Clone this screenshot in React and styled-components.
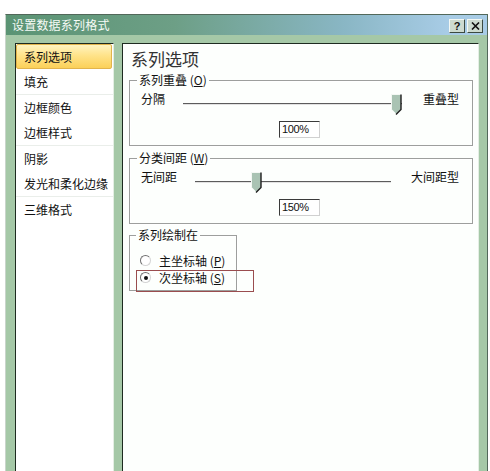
import React from "react";
import styled, { createGlobalStyle } from "styled-components";

const GlobalStyle = createGlobalStyle`
  html, body {
    margin: 0;
    padding: 0;
    background: #ffffff;
  }
  body {
    font-family: "Noto Sans CJK SC", "Noto Sans", sans-serif;
    color: #111;
  }
`;

const categories = [
  ["系列选项", "填充"],
  ["边框颜色", "边框样式"],
  ["阴影", "发光和柔化边缘"],
  ["三维格式"],
];

const App = () => {
  return (
    <>
      <GlobalStyle />
      <Page>
        <Dialog>
          <TitleBar>
            <Title>设置数据系列格式</Title>
            <TitleButtons>
              <CaptionButton>?</CaptionButton>
              <CaptionButton>
                <svg width="9" height="8" viewBox="0 0 9 8">
                  <path d="M1 0.5 L8 7.5 M8 0.5 L1 7.5" stroke="#111" strokeWidth="1.6" />
                </svg>
              </CaptionButton>
            </TitleButtons>
          </TitleBar>

          <Body>
            <NavPanel>
              {categories.map((group, gi) => (
                <React.Fragment key={gi}>
                  {gi > 0 && <NavSeparator />}
                  {group.map((name) => (
                    <NavItem key={name} $active={name === "系列选项"}>
                      {name}
                    </NavItem>
                  ))}
                </React.Fragment>
              ))}
            </NavPanel>

            <ContentPanel>
              <Heading>系列选项</Heading>

              <Group $top={9}>
                <Legend>
                  系列重叠 (<u>O</u>)
                </Legend>
                <SliderRow>
                  <SideLabel $width={42}>分隔</SideLabel>
                  <Slider width={219} value={1} />
                  <SideLabel $gap={21}>重叠型</SideLabel>
                </SliderRow>
                <ValueBox>100%</ValueBox>
              </Group>

              <Group $top={12}>
                <Legend>
                  分类间距 (<u>W</u>)
                </Legend>
                <SliderRow>
                  <SideLabel $width={54}>无间距</SideLabel>
                  <Slider width={196} value={0.3} />
                  <SideLabel $gap={20}>大间距型</SideLabel>
                </SliderRow>
                <ValueBox>150%</ValueBox>
              </Group>

              <Group $top={11} $width={108} $compact>
                <Legend>系列绘制在</Legend>
                <RadioRow>
                  <RadioDot />
                  <span>
                    主坐标轴 (<u>P</u>)
                  </span>
                </RadioRow>
                <RadioRow>
                  <RadioDot $checked />
                  <span>
                    次坐标轴 (<u>S</u>)
                  </span>
                </RadioRow>
              </Group>

              <Highlight />
            </ContentPanel>
          </Body>
        </Dialog>
      </Page>
    </>
  );
};

const Slider = ({ width, value }) => (
  <SliderTrack $width={width}>
    <Thumb style={{ left: Math.round(value * (width - 11)) }}>
      <svg width="11" height="21" viewBox="0 0 11 21">
        <polygon points="0.5,0.5 10,0.5 10,15 5.5,20 0.5,15" fill="#a9c3b3" />
        <polyline points="0.5,15 0.5,0.5 10,0.5" fill="none" stroke="#f4f8f4" />
        <polyline points="10,0.5 10,15.5 5,20.5" fill="none" stroke="#1e1e1e" strokeWidth="1.4" />
      </svg>
    </Thumb>
  </SliderTrack>
);

const Page = styled.div`
  height: 471px;
  overflow: hidden;
  padding: 14px 0 0 5px;
  box-sizing: border-box;
`;

const Dialog = styled.div`
  width: 483px;
  height: 470px;
  box-sizing: border-box;
  border: 1px solid #52685a;
  border-left-color: #c9d4cb;
  background: #a5c8a7;
  display: flex;
  flex-direction: column;
`;

const TitleBar = styled.div`
  height: 20px;
  flex-shrink: 0;
  display: flex;
  align-items: center;
  justify-content: space-between;
  padding: 0 4px 0 6px;
  background: linear-gradient(to right, #5b9474 0%, #6d9f86 35%, #89b6c4 70%, #a8cce6 92%);
`;

const Title = styled.span`
  color: #f6fbf6;
  font-size: 12px;
  line-height: 20px;
  letter-spacing: 0.2px;
`;

const TitleButtons = styled.div`
  display: flex;
  gap: 2px;
  padding-top: 2px;
`;

const CaptionButton = styled.div`
  width: 16px;
  height: 14px;
  box-sizing: border-box;
  display: flex;
  align-items: center;
  justify-content: center;
  background: #cddbd0;
  border: 1px solid;
  border-color: #f4f8f4 #3c4a40 #3c4a40 #f4f8f4;
  font-family: "Liberation Sans", sans-serif;
  font-weight: bold;
  font-size: 11px;
  color: #111;
`;

const Body = styled.div`
  flex: 1;
  display: flex;
  gap: 8px;
  padding: 8px 8px 8px 9px;
`;

const NavPanel = styled.div`
  width: 99px;
  box-sizing: border-box;
  background: #ffffff;
  border: 1px solid;
  border-color: #1d2b20 #e4eee4 #e4eee4 #1d2b20;
  display: flex;
  flex-direction: column;
`;

const NavItem = styled.div`
  height: 25px;
  box-sizing: border-box;
  padding-left: 7px;
  font-size: 12px;
  margin-right: 1px;
  border-radius: 2px;
  border: 1px solid ${(p) => (p.$active ? "#e2b44c" : "transparent")};
  line-height: 23px;
  background: ${(p) =>
    p.$active ? "linear-gradient(to bottom, #fff4c0 0%, #ffe38a 45%, #fbd059 100%)" : "transparent"};
`;

const NavSeparator = styled.div`
  height: 1px;
  background: #eaeeea;
`;

const ContentPanel = styled.div`
  position: relative;
  flex: 1;
  box-sizing: border-box;
  background: #fdfffd;
  border: 1px solid;
  border-color: #1d2b20 #e4eee4 #e4eee4 #1d2b20;
  padding: 0 5px 0 6px;
`;

const Heading = styled.div`
  padding: 3px 0 0 2px;
  font-size: 17px;
  line-height: 24px;
  color: #333;
`;

const Group = styled.div`
  margin-top: ${(p) => p.$top}px;
  width: ${(p) => (p.$width ? `${p.$width}px` : "auto")};
  box-sizing: border-box;
  border: 1px solid #9d9f9d;
  box-shadow: inset 1px 1px 0 #ffffff, 1px 1px 0 #ffffff;
  padding: 0 ${(p) => (p.$compact ? 2 : 10)}px ${(p) => (p.$compact ? 4 : 7)}px
    ${(p) => (p.$compact ? 10 : 11)}px;
  white-space: nowrap;
`;

const Legend = styled.div`
  width: fit-content;
  margin: -10px 0 0 -4px;
  padding: 0 2px;
  background: #fdfffd;
  font-size: 12px;
  line-height: 18px;
`;

const SliderRow = styled.div`
  display: flex;
  align-items: flex-start;
  height: 22px;
  padding-top: 3px;
`;

const SideLabel = styled.span`
  width: ${(p) => (p.$width ? `${p.$width}px` : "auto")};
  margin-left: ${(p) => p.$gap || 0}px;
  font-size: 12px;
  line-height: 14px;
`;

const SliderTrack = styled.div`
  position: relative;
  width: ${(p) => p.$width}px;
  height: 2px;
  margin-top: 11px;
  box-sizing: border-box;
  border-top: 1px solid #5c5c5c;
  border-bottom: 1px solid #e2e2e2;
`;

const Thumb = styled.div`
  position: absolute;
  top: -10px;
  width: 11px;
  height: 21px;
  line-height: 0;
`;

const ValueBox = styled.div`
  width: 41px;
  height: 17px;
  box-sizing: border-box;
  margin: 7px 0 0 138px;
  background: #ffffff;
  border: 1px solid;
  border-color: #3a3a3a #d0d0d0 #d0d0d0 #3a3a3a;
  padding-left: 2px;
  font-family: "Liberation Sans", sans-serif;
  font-size: 11px;
  letter-spacing: -0.4px;
  line-height: 15px;
`;

const RadioRow = styled.div`
  display: flex;
  align-items: center;
  gap: 8px;
  height: 17px;
  font-size: 12px;
  line-height: 17px;
  &:nth-of-type(2) {
    margin-top: 8px;
  }
`;

const RadioDot = styled.span`
  position: relative;
  width: 11px;
  height: 11px;
  box-sizing: border-box;
  border-radius: 50%;
  border: 1px solid;
  border-color: #6f6f6f #d4d4d4 #d4d4d4 #6f6f6f;
  background: #ffffff;
  flex-shrink: 0;
  &::after {
    content: "";
    display: ${(p) => (p.$checked ? "block" : "none")};
    position: absolute;
    left: 2.5px;
    top: 2.5px;
    width: 4px;
    height: 4px;
    border-radius: 50%;
    background: #111;
  }
`;

/* hand-drawn marker over the second radio option */
const Highlight = styled.div`
  position: absolute;
  left: 13px;
  top: 226px;
  width: 118px;
  height: 22px;
  box-sizing: border-box;
  border: 1px solid #9a4d4f;
  pointer-events: none;
`;

export default App;
